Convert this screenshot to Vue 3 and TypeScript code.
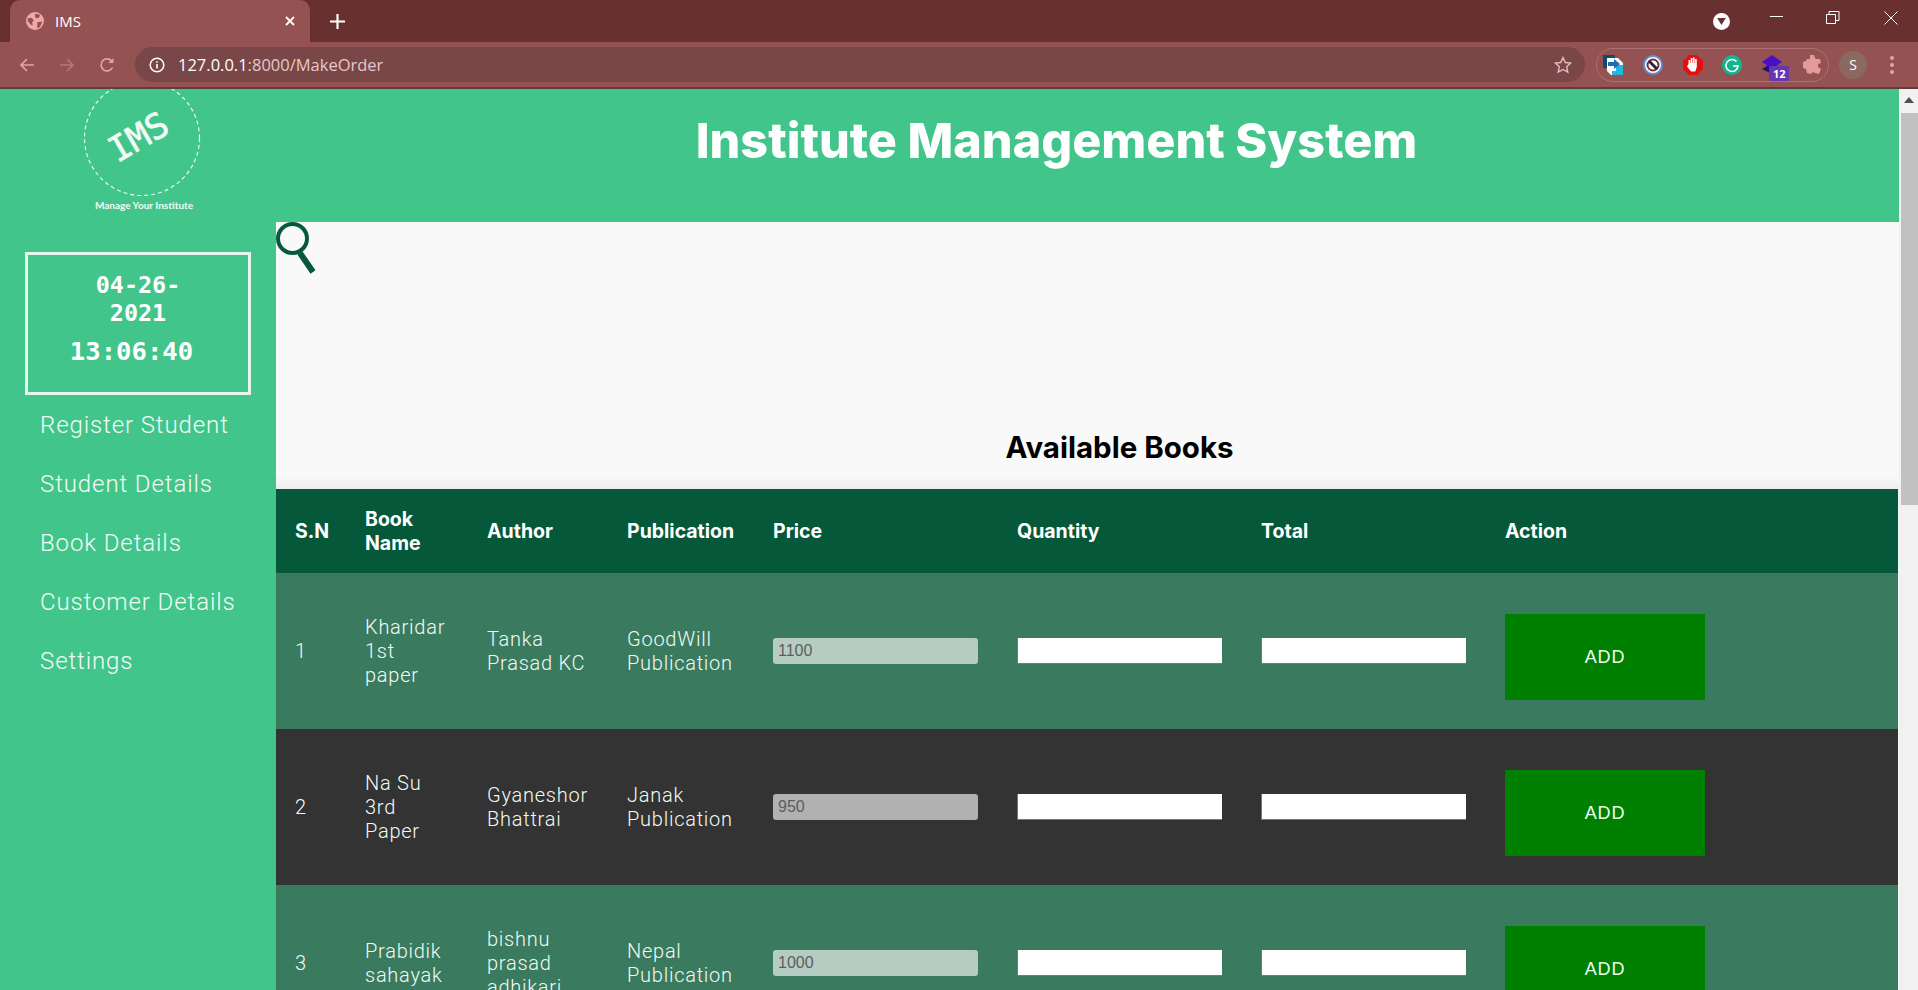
<script setup lang="ts">
interface Book {
  sn: number
  name: string
  author: string
  publication: string
  price: string
}

const menu = ['Register Student', 'Student Details', 'Book Details', 'Customer Details', 'Settings']

const books: Book[] = [
  { sn: 1, name: 'Kharidar 1st paper', author: 'Tanka Prasad KC', publication: 'GoodWill Publication', price: '1100' },
  { sn: 2, name: 'Na Su 3rd Paper', author: 'Gyaneshor Bhattrai', publication: 'Janak Publication', price: '950' },
  { sn: 3, name: 'Prabidik sahayak', author: 'bishnu prasad adhikari', publication: 'Nepal Publication', price: '1000' },
]
</script>

<template>
  <div class="window">
    <!-- browser frame -->
    <div class="tabstrip">
      <div class="tab">
        <svg class="favicon" viewBox="0 0 16 16">
          <circle cx="8" cy="8" r="8" fill="#f0a8a8" />
          <path d="M1.500 5.500L5 5l2 2.500-1.500 1.500.5 3-2-1-2.500-3zM8 1.500l4.500 1-1 2.500-2.500.5L8 4zM10 9l4.500-.5-2 4.500-2.500 1.500z" fill="#955252" />
        </svg>
        <span class="tab-title">IMS</span>
        <svg class="tab-close" viewBox="0 0 10 10"><path d="M1 1l8 8M9 1l-8 8" stroke="#fff" stroke-width="1.800" /></svg>
      </div>
      <svg class="new-tab" viewBox="0 0 14 14"><path d="M7 0v14M0 7h14" stroke="#fff" stroke-width="2" /></svg>
      <div class="strip-right">
        <span class="tab-search"><svg viewBox="0 0 10 8"><path d="M0 0h10L5 8z" fill="#693030" /></svg></span>
        <svg class="win-btn min" viewBox="0 0 14 14"><path d="M0 5.500h13" stroke="#fff" /></svg>
        <svg class="win-btn" viewBox="0 0 14 14"><path d="M.5 3.500h9v9h-9zM3 3.500V.5h10v9h-3.500" fill="none" stroke="#fff" /></svg>
        <svg class="win-btn last" viewBox="0 0 14 14"><path d="M.5.500l13 13M13.500.500l-13 13" stroke="#fff" /></svg>
      </div>
    </div>
    <div class="toolbar">
      <svg class="nav-icon" viewBox="0 0 16 16"><path d="M15 8H2M8 2L2 8l6 6" fill="none" stroke="#eca0a0" stroke-width="1.700" /></svg>
      <svg class="nav-icon dim" viewBox="0 0 16 16"><path d="M1 8h13M8 2l6 6-6 6" fill="none" stroke="#bd7474" stroke-width="1.700" /></svg>
      <svg class="nav-icon reload" viewBox="0 0 16 16"><path d="M13.500 10.500A6 6 0 1 1 13 4.500" fill="none" stroke="#eca0a0" stroke-width="1.700" /><path d="M14.500 1v5h-5z" fill="#eca0a0" /></svg>
      <div class="omnibox">
        <svg class="info" viewBox="0 0 16 16"><circle cx="8" cy="8" r="6.800" fill="none" stroke="#fff" stroke-width="1.500" /><path d="M8 7v4.500M8 4.200v1.600" stroke="#fff" stroke-width="1.600" /></svg>
        <span class="url"><span class="host">127.0.0.1</span>:8000/MakeOrder</span>
        <svg class="star" viewBox="0 0 18 18"><path d="M9 1.500l2.300 5 5.400.6-4 3.700 1.100 5.400L9 13.500l-4.800 2.700 1.100-5.400-4-3.700 5.400-.6z" fill="none" stroke="#e3bcbc" stroke-width="1.400" /></svg>
      </div>
      <div class="extensions">
        <svg class="ext" viewBox="0 0 20 20"><path d="M0 0h12v4H5v9H0z" fill="#114a70" /><path d="M4 3h11l5 5v12H8l-4-4z" fill="#fff" /><path d="M13 10h7v10H9v-4h4z" fill="#22b8e0" /><path d="M5 7h6V4l6 5-6 5v-3H5z" fill="#1a6fb5" /></svg>
        <svg class="ext" viewBox="0 0 20 20"><circle cx="10" cy="10" r="9" fill="#fff" stroke="#5f8fd6" stroke-width="2" /><circle cx="10" cy="10" r="5.500" fill="none" stroke="#7a3030" stroke-width="2" /><path d="M6 6l8 8" stroke="#33213a" stroke-width="3" /></svg>
        <svg class="ext" viewBox="0 0 20 20"><path d="M6 0h8l6 6v8l-6 6H6l-6-6V6z" fill="#e60f0f" /><path d="M5.500 9V5h1.700v3h.5V3h1.700v5h.5V2.500h1.700V8h.5V4h1.700v8l-1.500 4.500H8L4 11.500z" fill="#fff" /></svg>
        <svg class="ext" viewBox="0 0 20 20"><circle cx="10" cy="10" r="10" fill="#15b48f" /><path d="M14.500 6.500A6 6 0 1 0 16 11h-5" fill="none" stroke="#fff" stroke-width="1.500" /></svg>
        <span class="ext-stack">
          <svg class="ext" viewBox="0 0 20 20"><path d="M10 8l10 6-10 5-10-5z" fill="#24107a" /><path d="M10 0l10 7-10 7L0 7z" fill="#4a0fc4" /></svg>
          <span class="badge">12</span>
        </span>
        <svg class="ext" viewBox="0 0 20 20"><path d="M8 0h4l1 3 1 1h4l1 4-3 1v3l3 2-2 5-4-1-2-1-2 2-4-1-1-4-3-1V7l3-1 1-2h3z" fill="#e59a9a" /></svg>
      </div>
      <span class="avatar">S</span>
      <span class="kebab"><i></i><i></i><i></i></span>
    </div>

    <!-- page -->
    <div class="page">
      <aside class="sidebar">
        <svg class="logo" viewBox="0 0 276 122" width="276" height="122">
          <circle cx="142" cy="49" r="57.500" fill="none" stroke="#e8f7ef" stroke-width="1.200" stroke-dasharray="4 3" />
          <text class="logo-mark" x="139" y="60" text-anchor="middle" transform="rotate(-30 139 49)">IMS</text>
          <text class="logo-tag" x="144" y="120" text-anchor="middle">Manage Your Institute</text>
        </svg>
        <div class="clock">
          <div class="clock-date">04-26-<br />2021</div>
          <div class="clock-time">13:06:40</div>
        </div>
        <nav class="menu">
          <a v-for="item in menu" :key="item" class="menu-item">{{ item }}</a>
        </nav>
      </aside>

      <main class="main">
        <header class="banner">
          <h1>Institute Management System</h1>
        </header>
        <section class="search">
          <svg class="search-icon" viewBox="0 0 40 52">
            <circle cx="16.500" cy="16.500" r="14.500" fill="none" stroke="#05593a" stroke-width="4" />
            <path d="M24 31l13 19" fill="none" stroke="#05593a" stroke-width="6" />
          </svg>
          <h2>Available Books</h2>
        </section>
        <table class="books">
          <colgroup>
            <col class="c-sn" />
            <col class="c-name" />
            <col class="c-author" />
            <col class="c-pub" />
            <col class="c-field" />
            <col class="c-field" />
            <col class="c-field" />
            <col />
          </colgroup>
          <thead>
            <tr>
              <th>S.N</th>
              <th>Book Name</th>
              <th>Author</th>
              <th>Publication</th>
              <th>Price</th>
              <th>Quantity</th>
              <th>Total</th>
              <th>Action</th>
            </tr>
          </thead>
          <tbody>
            <tr v-for="book in books" :key="book.sn">
              <td>{{ book.sn }}</td>
              <td>{{ book.name }}</td>
              <td>{{ book.author }}</td>
              <td>{{ book.publication }}</td>
              <td><input class="field" type="text" :value="book.price" disabled /></td>
              <td><input class="field" type="text" /></td>
              <td><input class="field" type="text" /></td>
              <td><button class="add" type="button">ADD</button></td>
            </tr>
          </tbody>
        </table>
      </main>

      <div class="scrollbar">
        <svg class="scroll-up" viewBox="0 0 10 6"><path d="M0 6l5-6 5 6z" fill="#505050" /></svg>
        <div class="thumb"></div>
      </div>
    </div>
  </div>
</template>

<style>
html,
body {
  margin: 0;
  overflow: hidden;
}
</style>

<style scoped>
.window {
  display: flex;
  flex-direction: column;
  height: 990px;
  overflow: hidden;
  font-family: Roboto, "Liberation Sans", sans-serif;
}

.tabstrip {
  display: flex;
  align-items: flex-end;
  height: 42px;
  flex: none;
  padding-left: 10px;
  background: #693030;
}
.tab {
  display: flex;
  align-items: center;
  width: 300px;
  height: 42px;
  box-sizing: border-box;
  padding: 0 15px 0 16px;
  border-radius: 10px 10px 0 0;
  background: #955252;
}
.favicon {
  width: 18px;
  height: 18px;
}
.tab-title {
  flex: 1;
  margin-left: 11px;
  color: #fff;
  font: 15px "Open Sans", "Liberation Sans", sans-serif;
}
.tab-close {
  width: 10px;
  height: 10px;
}
.new-tab {
  width: 15px;
  height: 15px;
  margin: 0 0 13px 20px;
}
.strip-right {
  display: flex;
  align-items: center;
  height: 42px;
  margin-left: auto;
}
.tab-search {
  display: flex;
  align-items: center;
  justify-content: center;
  width: 17px;
  height: 17px;
  margin-right: 40px;
  border-radius: 50%;
  background: #fff;
}
.tab-search svg {
  width: 9px;
  height: 7px;
}
.win-btn {
  width: 14px;
  height: 14px;
  margin: -6px 44px 0 0;
}
.win-btn.min {
  margin-right: 42px;
}
.win-btn.last {
  margin-right: 20px;
}

.toolbar {
  display: flex;
  align-items: center;
  height: 47px;
  flex: none;
  box-sizing: border-box;
  padding: 2px 0 2px 19px;
  border-bottom: 2px solid #5c3c3c;
  background: #955252;
}
.nav-icon {
  width: 16px;
  height: 16px;
  margin-right: 24px;
}
.nav-icon.reload {
  margin-right: 20px;
}
.omnibox {
  display: flex;
  align-items: center;
  width: 1450px;
  height: 35px;
  box-sizing: border-box;
  padding: 0 13px 0 14px;
  border-radius: 18px;
  background: #794747;
}
.info {
  width: 16px;
  height: 16px;
}
.url {
  flex: 1;
  margin-left: 13px;
  color: #e6c8c8;
  font: 16.500px "Open Sans", "Liberation Sans", sans-serif;
}
.host {
  color: #fff;
}
.star {
  width: 18px;
  height: 18px;
}
.extensions {
  display: flex;
  align-items: center;
  justify-content: space-between;
  width: 233px;
  height: 34px;
  box-sizing: border-box;
  margin-left: 11px;
  padding: 0 6px;
  border: 1px solid #ad6f6f;
  border-radius: 17px;
}
.ext {
  display: block;
  width: 20px;
  height: 20px;
}
.ext-stack {
  position: relative;
}
.badge {
  position: absolute;
  left: 7px;
  top: 11px;
  width: 20px;
  height: 15px;
  border-radius: 2px;
  background: #6436b0;
  color: #fff;
  font: bold 11px/15px "Open Sans", sans-serif;
  text-align: center;
}
.avatar {
  width: 28px;
  height: 28px;
  margin-left: 10px;
  border-radius: 50%;
  background: #8a6a60;
  color: #fff;
  font: 14px/28px "Open Sans", sans-serif;
  text-align: center;
}
.kebab {
  display: flex;
  flex-direction: column;
  gap: 3px;
  margin-left: 23px;
}
.kebab i {
  width: 4px;
  height: 4px;
  border-radius: 50%;
  background: #eca0a0;
}

.page {
  display: flex;
  flex: 1;
  min-height: 0;
  background: #f9f9f9;
}
.sidebar {
  width: 276px;
  flex: none;
  background: #42c58a;
}
.logo {
  display: block;
}
.logo-mark {
  fill: #f2fbf6;
  stroke: #f2fbf6;
  stroke-width: 0.600px;
  font: 35px "DejaVu Sans Mono", monospace;
}
.logo-tag {
  fill: #f2fbf6;
  font: bold 10px Lato, "DejaVu Sans", sans-serif;
}
.clock {
  width: 226px;
  height: 143px;
  box-sizing: border-box;
  margin: 41px 0 0 25px;
  padding-top: 16px;
  border: 3px solid #e6f6ee;
  color: #fff;
  font-family: "DejaVu Sans Mono", monospace;
  font-weight: bold;
  text-align: center;
}
.clock-date {
  font-size: 23.400px;
  line-height: 28px;
}
.clock-time {
  margin: 8px 13px 0 0;
  font-size: 25.600px;
  line-height: 32px;
}
.menu {
  display: flex;
  flex-direction: column;
  gap: 29px;
  margin: 15px 0 0 40px;
}
.menu-item {
  color: #f3fbf7;
  font-size: 24px;
  font-weight: 300;
  line-height: 30px;
  letter-spacing: 0.900px;
}

.main {
  flex: 1;
  min-width: 0;
}
.banner {
  display: flex;
  justify-content: center;
  height: 133px;
  box-sizing: border-box;
  padding-right: 62px;
  background: #42c58a;
}
.banner h1 {
  margin: 24px 0 0;
  color: #fff;
  font-family: Inter, Roboto, sans-serif;
  font-size: 48.500px;
  font-weight: 800;
  line-height: 56px;
}
.search {
  display: flex;
  flex-direction: column;
  height: 267px;
  background: linear-gradient(to bottom, transparent calc(100% - 14px), #eee);
}
.search-icon {
  display: block;
  width: 40px;
  height: 52px;
}
.search h2 {
  margin: 156px 0 0;
  padding-left: 64px;
  color: #000;
  font-family: Inter, Roboto, sans-serif;
  font-size: 29.500px;
  font-weight: 700;
  line-height: 34px;
  text-align: center;
}
.books {
  width: calc(100% - 1px);
  border-collapse: collapse;
  table-layout: fixed;
  color: #f1fbf5;
  font-size: 20px;
  line-height: 24px;
}
.c-sn {
  width: 70px;
}
.c-name {
  width: 122px;
}
.c-author {
  width: 140px;
}
.c-pub {
  width: 146px;
}
.c-field {
  width: 244px;
}
.books th {
  height: 84px;
  padding: 0 19px;
  background: #05593a;
  color: #fff;
  font-family: Inter, Roboto, sans-serif;
  font-size: 19.500px;
  font-weight: 700;
  text-align: left;
}
.books td {
  height: 156px;
  box-sizing: border-box;
  padding: 0 19px;
  font-weight: 300;
  letter-spacing: 0.750px;
}
.books tbody tr:nth-child(odd) td {
  background: #3a7a5f;
}
.books tbody tr:nth-child(even) td {
  background: #333;
}
.field {
  display: block;
  width: 205px;
  height: 26px;
  box-sizing: border-box;
  margin: 0;
  padding: 1px 4px;
  border: 0;
  border-left: 1px solid #777;
  border-bottom: 1px solid #777;
  background: #fff;
  font: 16px "Liberation Sans", sans-serif;
}
.field:disabled {
  padding-left: 5px;
  border: 0;
  border-radius: 3px;
  background: rgba(255, 255, 255, 0.62);
  color: #5d5d5d;
}
.add {
  display: block;
  width: 200px;
  height: 86px;
  margin-top: 12px;
  border: 0;
  background: #008000;
  color: #ecffee;
  font: 18px "Liberation Sans", sans-serif;
  letter-spacing: 0.900px;
}

.scrollbar {
  width: 19px;
  flex: none;
  background: #f1f1f1;
}
.scroll-up {
  display: block;
  width: 10px;
  height: 6px;
  margin: 8px 0 10px 5px;
}
.thumb {
  height: 392px;
  margin-left: 2px;
  background: #c1c1c1;
}
</style>
